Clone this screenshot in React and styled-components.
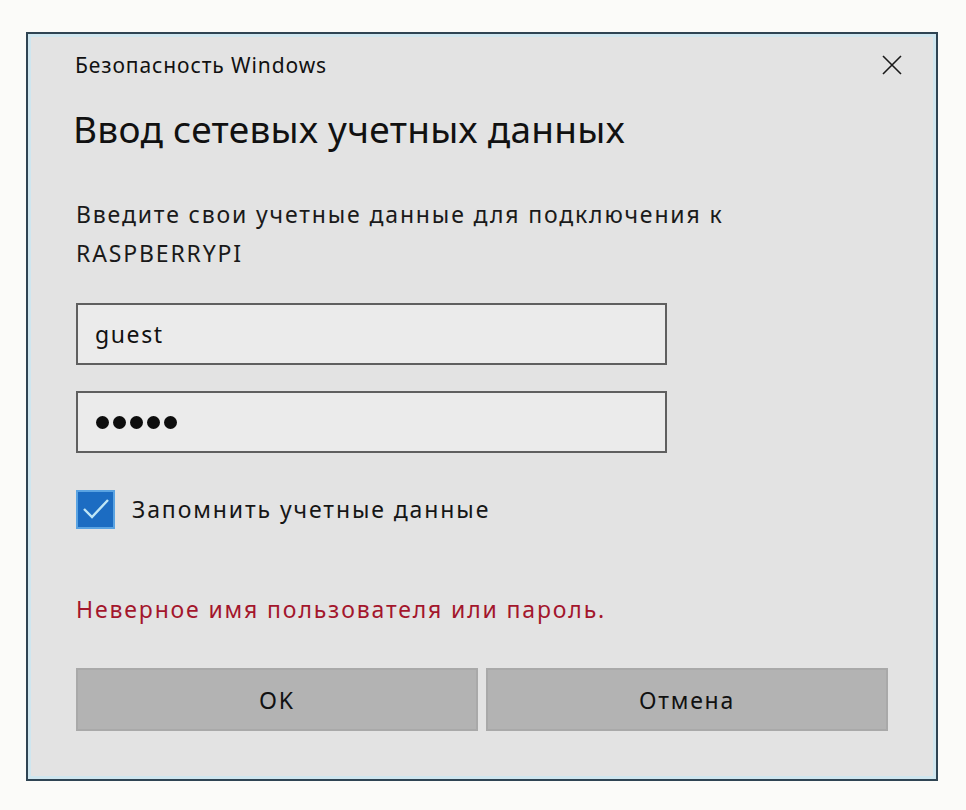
import React from "react";
import styled, { createGlobalStyle } from "styled-components";

const Global = createGlobalStyle`
  html, body { margin: 0; padding: 0; background: #fbfbf9; }
  body { font-family: "Noto Sans", "Open Sans", sans-serif; color: #111; }
`;

const Dialog = styled.div`
  box-sizing: border-box;
  margin: 32px 0 0 26px;
  width: 912px;
  height: 749px;
  border: 2px solid #2f4453;
  box-shadow: inset 0 0 0 3px #cfe6ef;
  background: #e3e3e3;
  padding: 0 47px 0 48px;
  display: flex;
  flex-direction: column;
`;

const TitleBar = styled.div`
  display: flex;
  justify-content: space-between;
  align-items: flex-start;
  padding-top: 17px;
  margin-right: -14px;
`;

const Title = styled.div`
  font-size: 21px;
  line-height: 28px;
  letter-spacing: 0.9px;
  color: #111;
  margin-left: -1px;
`;

const Close = styled.svg`
  width: 20px;
  height: 20px;
  margin-top: 4px;
  margin-right: 1px;
`;

const Heading = styled.h1`
  margin: 28px 0 0 -3px;
  font-weight: 400;
  font-size: 37px;
  line-height: 44px;
  letter-spacing: 0.3px;
  color: #111;
`;

const Text = styled.p`
  margin: ${(p) => p.$mt || 0}px 0 0 0;
  font-size: 23px;
  letter-spacing: 1.85px;
  line-height: ${(p) => p.$lh || 30}px;
  color: ${(p) => p.$color || "#1a1a1a"};
`;

const Field = styled.div`
  box-sizing: border-box;
  width: 591px;
  height: 62px;
  margin-top: ${(p) => p.$mt}px;
  border: 2px solid #5f5f5f;
  background: #ebebeb;
  display: flex;
  align-items: center;
  padding-left: 17px;
  font-size: 23px;
  letter-spacing: 1.6px;
  color: #111;
`;

const Dots = styled.div`
  display: flex;
  gap: 4px;
  margin-left: 1px;
`;

const Dot = styled.span`
  width: 13px;
  height: 13px;
  border-radius: 50%;
  background: #0d0d0d;
`;

const CheckRow = styled.div`
  display: flex;
  align-items: center;
  gap: 17px;
  margin-top: 37px;
  height: 38px;
`;

const Box = styled.div`
  box-sizing: border-box;
  width: 39px;
  height: 39px;
  background: #1c6cc2;
  border: 2px solid #5aa3e2;
  display: flex;
  align-items: center;
  justify-content: center;
`;

const Label = styled.span`
  font-size: 23px;
  letter-spacing: 1.9px;
  color: #161616;
`;

const Buttons = styled.div`
  display: grid;
  grid-template-columns: 402px 402px;
  gap: 8px;
  margin-top: 44px;
`;

const Button = styled.button`
  box-sizing: border-box;
  height: 63px;
  border: 2px solid #a9a9a9;
  background: #b3b3b3;
  font-family: inherit;
  font-size: 23px;
  letter-spacing: 1.8px;
  color: #111;
  padding: 0;
`;

export default function App() {
  return (
    <>
      <Global />
      <Dialog>
        <TitleBar>
          <Title>Безопасность Windows</Title>
          <Close viewBox="0 0 20 20">
            <path d="M1 1 L19 19 M19 1 L1 19" stroke="#1a1a1a" strokeWidth="1.6" fill="none" />
          </Close>
        </TitleBar>
        <Heading>Ввод сетевых учетных данных</Heading>
        <Text $mt={44} $lh={39}>
          Введите свои учетные данные для подключения к
          <br />
          RASPBERRYPI
        </Text>
        <Field $mt={30}>guest</Field>
        <Field $mt={26}>
          <Dots>
            {[0, 1, 2, 3, 4].map((i) => (
              <Dot key={i} />
            ))}
          </Dots>
        </Field>
        <CheckRow>
          <Box>
            <svg width="30" height="24" viewBox="0 0 30 24">
              <path d="M3 12 L11 20 L27 3" stroke="#bfe6f6" strokeWidth="2.4" fill="none" />
            </svg>
          </Box>
          <Label>Запомнить учетные данные</Label>
        </CheckRow>
        <Text $mt={66} $color="#a3162c">Неверное имя пользователя или пароль.</Text>
        <Buttons>
          <Button>OK</Button>
          <Button>Отмена</Button>
        </Buttons>
      </Dialog>
    </>
  );
}
